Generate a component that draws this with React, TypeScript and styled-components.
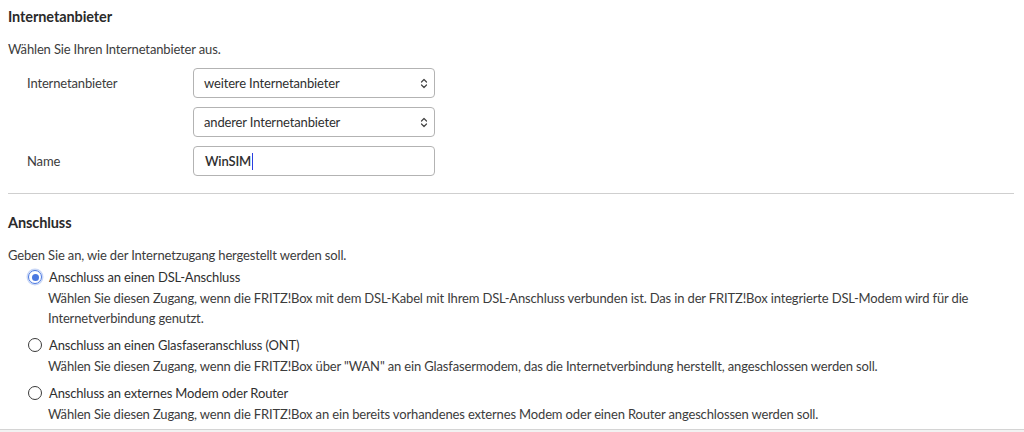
import React from "react";
import styled, { createGlobalStyle } from "styled-components";

const Global = createGlobalStyle`
  html, body { margin: 0; padding: 0; background: #fff; }
  body {
    font-family: "Source Sans Pro", Lato, "Liberation Sans", sans-serif;
    font-size: 13px;
    letter-spacing: -0.15px;
    color: #3c3c3c;
  }
`;

const Page = styled.div`
  padding: 0 10px 0 8px;
  display: flex;
  flex-direction: column;
`;

const Section = styled.section`
  display: flex;
  flex-direction: column;
`;

const Heading = styled.h2<{ $top: number }>`
  margin: 0;
  font-size: 14.5px;
  font-weight: 700;
  letter-spacing: -0.1px;
  color: #2a2a2a;
  line-height: 20px;
  padding-top: ${(p) => p.$top}px;
`;

const Intro = styled.p`
  margin: 0;
  line-height: 20px;
  padding-top: 12px;
`;

const FormGrid = styled.div`
  display: grid;
  grid-template-columns: 166px 242px;
  row-gap: 9px;
  padding: 9px 0 0 19px;
  align-items: center;
`;

const Label = styled.span`
  line-height: 20px;
`;

const Field = styled.div`
  box-sizing: border-box;
  height: 30px;
  border: 1px solid #b3b3b3;
  border-radius: 4px;
  display: flex;
  align-items: center;
  padding: 0 6px 0 10px;
  justify-content: space-between;
  color: #2f2f2f;
  background: #fff;
`;

const InputText = styled.span`
  display: flex;
  align-items: center;
  padding-left: 1px;
  font-weight: 600;
`;

const Caret = styled.span`
  display: inline-block;
  width: 1.5px;
  height: 17px;
  background: #2b3fe0;
  margin-left: 0.5px;
`;

const Divider = styled.hr`
  margin: 17px 0 0 0;
  border: none;
  border-top: 1.5px solid #cfcfcf;
  height: 0;
`;

const Options = styled.div`
  display: flex;
  flex-direction: column;
  gap: 7px;
  padding: 2px 0 0 19px;
`;

const Option = styled.div`
  display: flex;
  flex-direction: column;
`;

const OptionHead = styled.label`
  display: flex;
  align-items: center;
  gap: 7px;
  line-height: 20px;
  color: #2f2f2f;
`;

const Radio = styled.span<{ $checked?: boolean }>`
  box-sizing: border-box;
  width: 14px;
  height: 14px;
  border-radius: 50%;
  border: ${(p) => (p.$checked ? "1.5px solid #4a78e0" : "1.5px solid #3a3a3a")};
  box-shadow: ${(p) => (p.$checked ? "0 0 0 1.5px #c9d7f6" : "none")};
  display: flex;
  align-items: center;
  justify-content: center;
  margin-left: 1px;
  &::after {
    content: "";
    width: 7px;
    height: 7px;
    border-radius: 50%;
    background: #4a78e0;
    display: ${(p) => (p.$checked ? "block" : "none")};
  }
`;

const OptionDesc = styled.p`
  margin: 1px 0 0 0;
  padding-left: 21px;
  line-height: 20px;
`;

const Bottom = styled.div`
  margin: 5px -10px 0 -8px;
  height: 4px;
  border-top: 1.5px solid #d4d4d4;
  background: #f2f2f2;
`;

const Chevrons = () => (
  <svg width="8" height="11" viewBox="0 0 8 11" fill="none" stroke="#444" strokeWidth="1.2" strokeLinecap="round" strokeLinejoin="round">
    <path d="M1.5 4 L4 1.5 L6.5 4" />
    <path d="M1.5 7 L4 9.5 L6.5 7" />
  </svg>
);

const options = [
  {
    title: "Anschluss an einen DSL-Anschluss",
    desc: "Wählen Sie diesen Zugang, wenn die FRITZ!Box mit dem DSL-Kabel mit Ihrem DSL-Anschluss verbunden ist. Das in der FRITZ!Box integrierte DSL-Modem wird für die Internetverbindung genutzt.",
    checked: true,
  },
  {
    title: "Anschluss an einen Glasfaseranschluss (ONT)",
    desc: 'Wählen Sie diesen Zugang, wenn die FRITZ!Box über "WAN" an ein Glasfasermodem, das die Internetverbindung herstellt, angeschlossen werden soll.',
    checked: false,
  },
  {
    title: "Anschluss an externes Modem oder Router",
    desc: "Wählen Sie diesen Zugang, wenn die FRITZ!Box an ein bereits vorhandenes externes Modem oder einen Router angeschlossen werden soll.",
    checked: false,
  },
];

export default function App() {
  return (
    <>
      <Global />
      <Page>
        <Section>
          <Heading $top={7}>Internetanbieter</Heading>
          <Intro>Wählen Sie Ihren Internetanbieter aus.</Intro>
          <FormGrid>
            <Label>Internetanbieter</Label>
            <Field>
              <span>weitere Internetanbieter</span>
              <Chevrons />
            </Field>
            <span />
            <Field>
              <span>anderer Internetanbieter</span>
              <Chevrons />
            </Field>
            <Label>Name</Label>
            <Field>
              <InputText>
                WinSIM
                <Caret />
              </InputText>
            </Field>
          </FormGrid>
        </Section>
        <Divider />
        <Section>
          <Heading $top={19}>Anschluss</Heading>
          <Intro>Geben Sie an, wie der Internetzugang hergestellt werden soll.</Intro>
          <Options>
            {options.map((o) => (
              <Option key={o.title}>
                <OptionHead>
                  <Radio $checked={o.checked} />
                  {o.title}
                </OptionHead>
                <OptionDesc>{o.desc}</OptionDesc>
              </Option>
            ))}
          </Options>
        </Section>
        <Bottom />
      </Page>
    </>
  );
}
